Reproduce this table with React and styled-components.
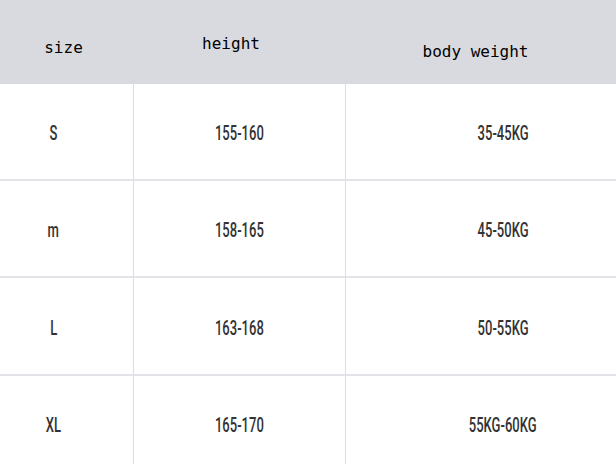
import React from 'react'
import styled, { createGlobalStyle } from 'styled-components'

const GlobalStyle = createGlobalStyle`
  html, body {
    margin: 0;
    padding: 0;
    background: #ffffff;
    overflow: hidden;
  }
`

const Table = styled.div`
  display: grid;
  grid-template-columns: 133px 212px 1fr;
  grid-template-rows: 84px 97px 97px 98px 97px;
  width: 616px;
  height: 464px;
  overflow: hidden;
`

const HeadCell = styled.div`
  background: #d9dadf;
  display: flex;
  align-items: center;
  justify-content: center;
  font-family: "DejaVu Sans Mono", "Liberation Mono", monospace;
  font-size: 16px;
  color: #000;
  padding-right: ${p => p.$pr || 0}px;
  padding-top: ${p => p.$dy || 0}px;
`

const Cell = styled.div`
  display: flex;
  align-items: center;
  justify-content: center;
  border-left: ${p => (p.$first ? 'none' : '1px solid #dcdde3')};
  border-bottom: 2px solid #e2e3e7;
  padding-top: 3px;
  padding-left: ${p => p.$pl || 0}px;
  padding-right: ${p => p.$pr || 0}px;
  box-sizing: border-box;
`

const Value = styled.span`
  display: inline-block;
  font-family: "Roboto", "Liberation Sans", sans-serif;
  font-size: 21px;
  font-weight: 500;
  color: #333;
  transform: scaleX(0.62);
`

const rows = [
  ['S', '155-160', '35-45KG'],
  ['m', '158-165', '45-50KG'],
  ['L', '163-168', '50-55KG'],
  ['XL', '165-170', '55KG-60KG'],
]

const App = () => (
  <>
    <GlobalStyle />
    <Table>
      <HeadCell $pr={6} $dy={10}>size</HeadCell>
      <HeadCell $pr={16} $dy={2}>height</HeadCell>
      <HeadCell $pr={10} $dy={18}>body weight</HeadCell>
      {rows.map(r => (
        <React.Fragment key={r[0]}>
          <Cell $first $pr={26}><Value>{r[0]}</Value></Cell>
          <Cell><Value>{r[1]}</Value></Cell>
          <Cell $pl={44}><Value>{r[2]}</Value></Cell>
        </React.Fragment>
      ))}
    </Table>
  </>
)

export default App
